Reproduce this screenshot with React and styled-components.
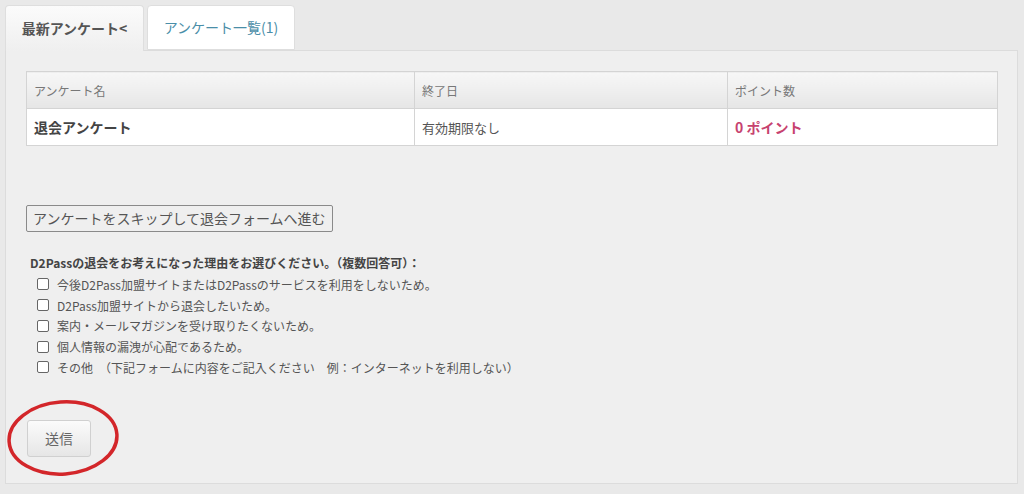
import React from 'react'
import styled, { createGlobalStyle } from 'styled-components'

const GlobalStyle = createGlobalStyle`
  html, body {
    margin: 0;
    padding: 0;
    background: #e9e9e9;
    font-family: "Noto Sans CJK JP", "Noto Sans", sans-serif;
    color: #555;
  }
`

const Page = styled.div`
  width: 1024px;
  height: 494px;
  padding: 5px 6px 0 5px;
  box-sizing: border-box;
`

const Tabs = styled.div`
  display: flex;
  gap: 3px;
  height: 45px;
`

const Tab = styled.div`
  box-sizing: border-box;
  width: ${p => p.w}px;
  height: ${p => (p.active ? 46 : 45)}px;
  display: flex;
  align-items: center;
  justify-content: center;
  border: 1px solid #dedede;
  border-bottom: ${p => (p.active ? 'none' : '1px solid #dedede')};
  border-radius: 4px 4px 0 0;
  font-size: 14px;
  font-weight: ${p => (p.active ? 700 : 400)};
  color: ${p => (p.active ? '#555' : '#4a8ea8')};
  background: ${p => (p.active ? 'linear-gradient(#fbfbfb, #efefef)' : '#fff')};
  padding-bottom: 2px;
  z-index: 1;
`

const Panel = styled.div`
  box-sizing: border-box;
  height: 434px;
  background: #efefef;
  border: 1px solid #dcdcdc;
  padding: 20px 19px 0 20px;
`

const Table = styled.table`
  width: 100%;
  table-layout: fixed;
  border-collapse: collapse;
  border: 1px solid #d4d4d4;
`

const Th = styled.th`
  height: 36px;
  padding: 0 7px;
  text-align: left;
  font-size: 12px;
  font-weight: 400;
  color: #777;
  border-right: 1px solid #d4d4d4;
  border-bottom: 1px solid #d4d4d4;
  background: linear-gradient(#f7f7f7, #e6e6e6);
`

const Td = styled.td`
  height: 36px;
  padding: 0 7px;
  background: #fff;
  border-right: 1px solid #d4d4d4;
  font-size: ${p => (p.strong ? 14 : 13)}px;
  font-weight: ${p => (p.strong ? 700 : 400)};
  color: ${p => p.color || '#555'};
`

const SkipButton = styled.button`
  display: block;
  margin-top: 59px;
  height: 27px;
  padding: 0 6px;
  border: 1px solid #8a8a8a;
  border-radius: 2px;
  background: #efefef;
  font-family: inherit;
  font-size: 14px;
  color: #555;
  line-height: 25px;
`

const Question = styled.p`
  margin: 22px 0 2px 4px;
  font-size: 12px;
  font-weight: 700;
  color: #444;
  line-height: 18px;
`

const Options = styled.div`
  display: flex;
  flex-direction: column;
  padding-left: 11px;
`

const Option = styled.label`
  display: flex;
  align-items: center;
  gap: 8px;
  height: 20.75px;
  font-size: 12px;
  color: #555;
  white-space: pre;
`

const Check = styled.input.attrs({ type: 'checkbox' })`
  appearance: none;
  margin: 0;
  width: 12px;
  height: 12px;
  border: 1px solid #666;
  border-radius: 2px;
  background: #fff;
`

const SubmitWrap = styled.div`
  position: relative;
  width: 64px;
  margin-top: 42px;
  margin-left: 1px;
`

const SubmitButton = styled.button`
  width: 64px;
  height: 37px;
  border: 1px solid #d0d0d0;
  border-radius: 3px;
  background: linear-gradient(#fbfbfb, #e6e6e6);
  font-family: inherit;
  font-size: 14px;
  color: #666;
`

const Circle = styled.svg`
  position: absolute;
  left: -21px;
  top: -20px;
  pointer-events: none;
`

const reasons = [
  '今後D2Pass加盟サイトまたはD2Passのサービスを利用をしないため。',
  'D2Pass加盟サイトから退会したいため。',
  '案内・メールマガジンを受け取りたくないため。',
  '個人情報の漏洩が心配であるため。',
  'その他　（下記フォームに内容をご記入ください　例：インターネットを利用しない）'
]

export default function App () {
  return (
    <Page>
      <GlobalStyle />
      <Tabs>
        <Tab active w={139}>最新アンケート&lt;</Tab>
        <Tab w={148}>アンケート一覧(1)</Tab>
      </Tabs>
      <Panel>
        <Table>
          <colgroup>
            <col style={{ width: 388 }} />
            <col style={{ width: 313 }} />
            <col />
          </colgroup>
          <thead>
            <tr>
              <Th>アンケート名</Th>
              <Th>終了日</Th>
              <Th>ポイント数</Th>
            </tr>
          </thead>
          <tbody>
            <tr>
              <Td strong color='#444'>退会アンケート</Td>
              <Td>有効期限なし</Td>
              <Td strong color='#c7426f'>0 ポイント</Td>
            </tr>
          </tbody>
        </Table>
        <SkipButton>アンケートをスキップして退会フォームへ進む</SkipButton>
        <Question>D2Passの退会をお考えになった理由をお選びください。（複数回答可）：</Question>
        <Options>
          {reasons.map(r => (
            <Option key={r}>
              <Check />
              {r}
            </Option>
          ))}
        </Options>
        <SubmitWrap>
          <SubmitButton>送信</SubmitButton>
          <Circle width='116' height='78' viewBox='0 0 116 78'>
            <ellipse cx='57' cy='38' rx='54' ry='36' fill='none' stroke='#d3262a' strokeWidth='3.5' transform='rotate(-4 57 38)' />
          </Circle>
        </SubmitWrap>
      </Panel>
    </Page>
  )
}
